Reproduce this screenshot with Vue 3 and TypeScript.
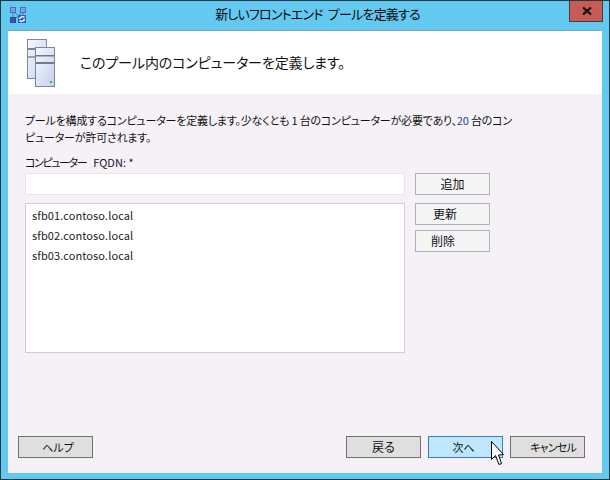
<script setup lang="ts">
const hosts: string[] = ['sfb01.contoso.local', 'sfb02.contoso.local', 'sfb03.contoso.local']
</script>

<template>
  <div class="win">
    <div class="titlebar">
      <svg class="appicon" width="16" height="16" viewBox="0 0 16 16">
        <path d="M3 5 L3 12 M13 5 L13 9 M4 5 L11 11 M12 5 L5 12" stroke="#5577c8" stroke-width="1" fill="none" />
        <rect x="0.5" y="0.5" width="5" height="5" fill="#7f9fe6" stroke="#4a6cc0" />
        <rect x="10.5" y="0.5" width="5" height="5" fill="#7f9fe6" stroke="#4a6cc0" />
        <rect x="0.5" y="10.5" width="5" height="5" fill="#3458b0" stroke="#2c4a98" />
        <rect x="8" y="8" width="8" height="8" fill="#2f63b8" />
        <path d="M9.5 12 A3 3 0 0 1 14.5 10.5 M14.5 12 A3 3 0 0 1 9.5 13.5" stroke="#fff" stroke-width="1.3" fill="none" />
      </svg>
      <div class="title">新しいフロントエンド プールを定義する</div>
      <div class="close">
        <svg width="10" height="8" viewBox="0 0 10 8">
          <path d="M1 0.5 L9 7.5 M9 0.5 L1 7.5" stroke="#111" stroke-width="2.2" />
        </svg>
      </div>
    </div>
    <div class="client">
      <div class="head">
        <svg class="servers" width="28" height="48" viewBox="0 0 28 48">
          <defs>
            <linearGradient id="srv" x1="0" y1="0" x2="1" y2="1">
              <stop offset="0" stop-color="#f6f8fd" />
              <stop offset="1" stop-color="#c3d0ee" />
            </linearGradient>
          </defs>
          <rect x="0.5" y="0.5" width="19" height="39" fill="url(#srv)" stroke="#7c8799" />
          <rect x="1" y="9" width="18" height="2" fill="#7c8799" />
          <rect x="1" y="17" width="18" height="2" fill="#9aa4b5" />
          <rect x="8.5" y="8.5" width="19" height="39" fill="url(#srv)" stroke="#7c8799" />
          <rect x="9" y="16" width="18" height="1.5" fill="#6f7a8c" />
          <rect x="9" y="23" width="18" height="2" fill="#6f7a8c" />
          <rect x="23" y="42" width="2" height="2" fill="#14d414" />
        </svg>
        <h1 class="heading">このプール内のコンピューターを定義します。</h1>
      </div>
      <div class="body">
        <p class="desc">プールを構成するコンピューターを定義します。少なくとも 1 台のコンピューターが必要であり、<span class="num">20</span> 台のコンピューターが許可されます。</p>
        <label class="lbl"><span class="kana">コンピューター</span><span class="fq">FQDN: *</span></label>
        <div class="grid">
          <div class="input"></div>
          <button class="btn add">追加</button>
          <ul class="list">
            <li v-for="h in hosts" :key="h">{{ h }}</li>
          </ul>
          <div class="side">
            <button class="btn upd">更新</button>
            <button class="btn del">削除</button>
          </div>
        </div>
        <div class="footer">
          <button class="btn dark help">ヘルプ</button>
          <div class="spacer"></div>
          <button class="btn dark">戻る</button>
          <button class="btn next">次へ</button>
          <button class="btn dark cancel">キャンセル</button>
        </div>
      </div>
    </div>
    <svg class="cursor" width="13" height="26" viewBox="0 0 13 26">
      <path d="M0.5 0.5 L0.5 18.5 L4.5 14.5 L8 23.5 L10.5 22.5 L7.5 14 L12.5 13.5 Z" fill="#fff" stroke="#000" stroke-width="1" />
    </svg>
  </div>
</template>

<style>
html, body { margin: 0; background: #63c9f0; }
</style>

<style scoped>
.win {
  position: relative;
  box-sizing: border-box;
  width: 610px;
  height: 480px;
  display: flex;
  flex-direction: column;
  background: #63c9f0;
  border: 1px solid #2a3742;
  font-family: "Noto Sans CJK JP", "Noto Sans", sans-serif;
  font-feature-settings: "palt";
  color: #111;
  overflow: hidden;
}
.titlebar {
  flex: none;
  height: 29px;
  display: flex;
  align-items: flex-start;
  padding-left: 9px;
}
.appicon { margin-top: 6px; flex: none; }
.title {
  flex: 1;
  padding-top: 4px;
  padding-left: 40px;
  font-size: 13px;
  letter-spacing: -0.8px;
  word-spacing: 3px;
  line-height: 18px;
  text-align: center;
  color: #0a0a0a;
}
.close {
  flex: none;
  box-sizing: border-box;
  width: 34px;
  height: 22px;
  margin-top: -1px;
  margin-right: 6px;
  padding-left: 2px;
  background: #c75c54;
  border: 1px solid #4a3a3c;
  display: flex;
  align-items: center;
  justify-content: center;
}
.client {
  flex: none;
  margin: 0 7px;
  height: 442px;
  display: flex;
  flex-direction: column;
  border-top: 1px solid #7aa8c8;
}
.head {
  flex: none;
  height: 63px;
  background: #fff;
  display: flex;
  align-items: flex-start;
  padding-left: 19px;
  box-sizing: border-box;
}
.servers { margin-top: 8px; flex: none; }
.heading {
  margin: 20px 0 0 25px;
  font-size: 14px;
  letter-spacing: -0.1px;
  line-height: 22px;
  font-weight: 400;
  color: #111;
}
.body {
  flex: 1;
  background: #f5f1f6;
  display: flex;
  flex-direction: column;
  padding: 18px 17px 15px 10px;
  min-height: 0;
}
.desc {
  margin: 0 0 0 7px;
  width: 490px;
  font-size: 11px;
  letter-spacing: -0.2px;
  line-height: 17px;
  color: #111;
}
.num { color: #1f3f9a; }
.lbl {
  margin: 8px 0 0 7px;
  font-size: 11px;
  line-height: 16px;
  color: #111;
}
.kana {
  letter-spacing: -1.4px;
  margin-right: 7px;
}
.fq { color: #1a1030; }
.grid {
  margin: 3px 0 0 7px;
  display: grid;
  grid-template-columns: 380px 75px;
  column-gap: 10px;
  row-gap: 8px;
  align-items: start;
}
.input {
  box-sizing: border-box;
  height: 22px;
  background: #fff;
  border: 1px solid #e9e5ee;
}
.list {
  box-sizing: border-box;
  height: 150px;
  margin: 0;
  padding: 1px 6px;
  list-style: none;
  background: #fff;
  border: 1px solid #cfcfcf;
  font-size: 11px;
  letter-spacing: 0.1px;
  line-height: 20px;
  color: #222;
}
.side {
  display: flex;
  flex-direction: column;
  gap: 5px;
}
.btn {
  box-sizing: border-box;
  width: 75px;
  height: 22px;
  padding: 0;
  font: inherit;
  font-size: 12px;
  line-height: 18px;
  color: #111;
  background: #f5f5f5;
  border: 1px solid #adb2b5;
  border-radius: 0;
}
.upd { padding-right: 15px; }
.del { padding-right: 19px; }
.dark {
  background: #dfdfdf;
  border-color: #707070;
}
.help { padding-left: 5px; font-size: 11px; }
.cancel { padding-left: 11px; font-size: 11px; letter-spacing: -0.8px; }
.next {
  padding-right: 4px;
  font-size: 11px;
  background: #bee6fd;
  border-color: #3c7fb1;
}
.footer {
  margin-top: auto;
  display: flex;
  gap: 7px;
}
.spacer { flex: 1; }
.cursor {
  position: absolute;
  left: 490px;
  top: 440px;
}
</style>
